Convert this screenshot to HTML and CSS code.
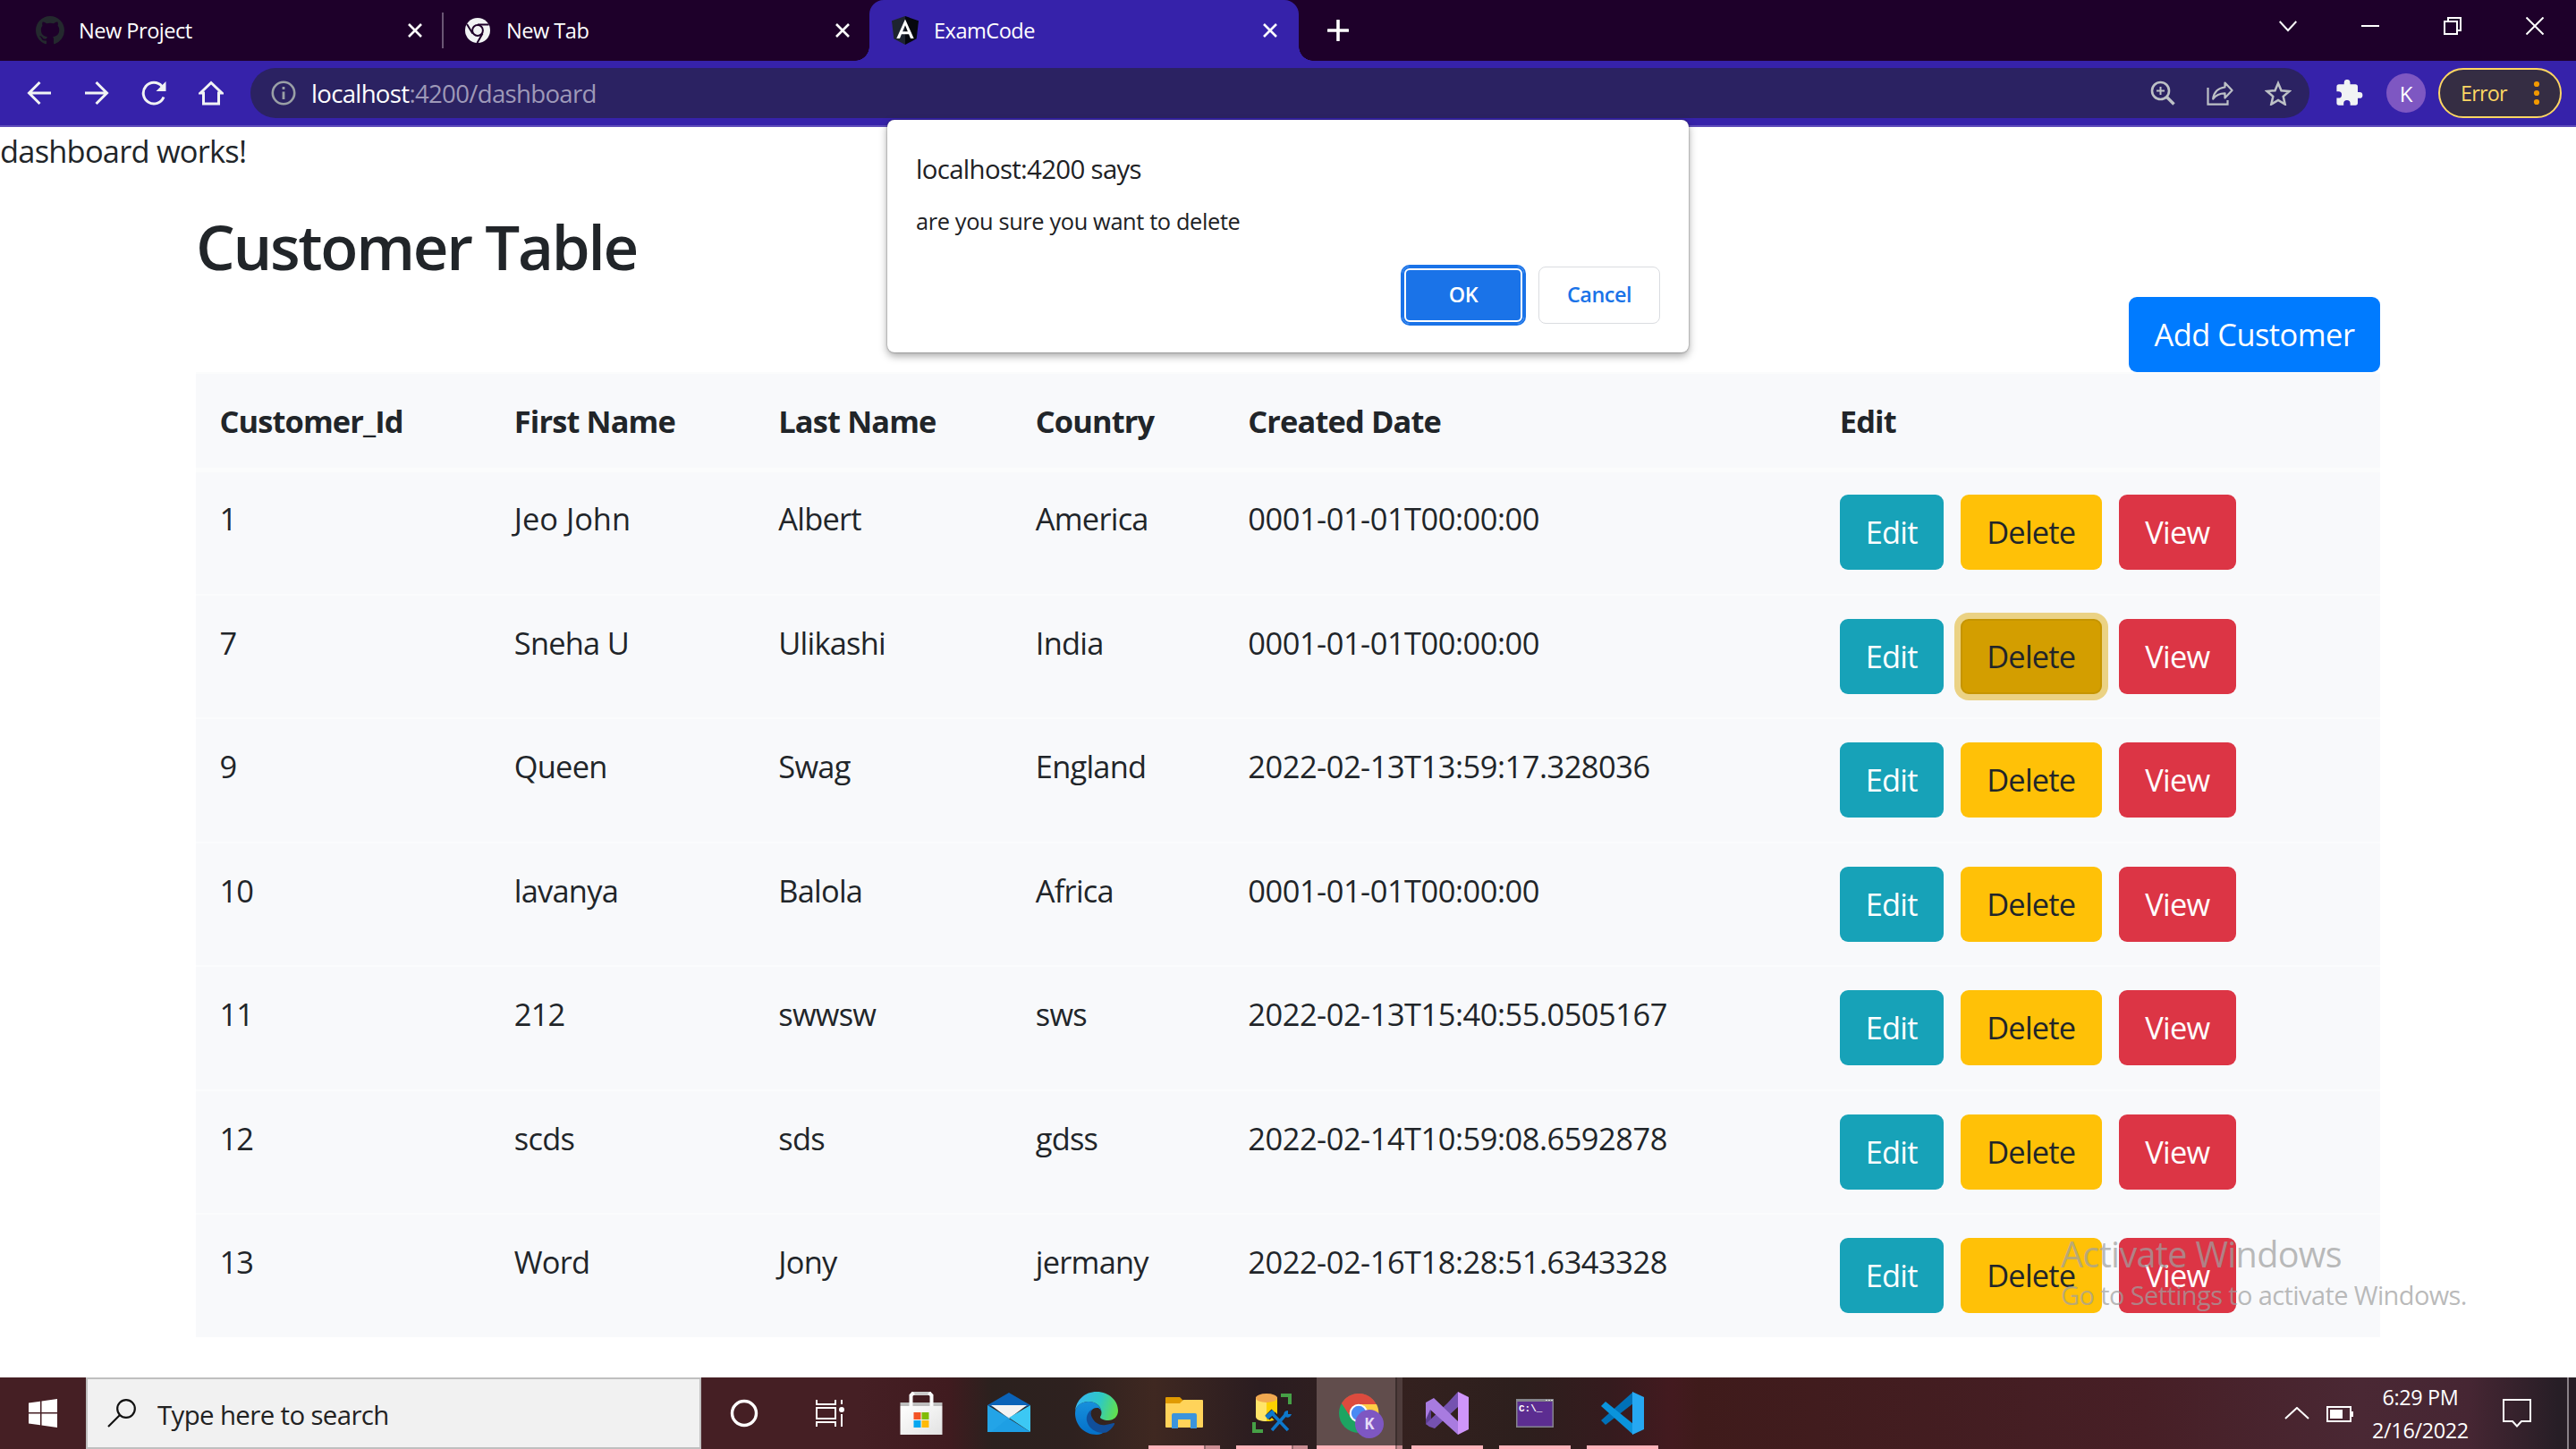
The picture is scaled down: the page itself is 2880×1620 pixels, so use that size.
FILE: index.html
```html
<!DOCTYPE html>
<html lang="en">
<head>
<meta charset="utf-8">
<title>ExamCode</title>
<link rel="stylesheet" href="styles.css">
</head>
<body>
<header class="tabstrip">
  <div class="tab tab-first">
    <svg class="fav" width="32" height="32" viewBox="0 0 16 16"><path fill="#24292e" d="M8 0C3.58 0 0 3.58 0 8c0 3.54 2.29 6.53 5.47 7.59.4.07.55-.17.55-.38 0-.19-.01-.82-.01-1.49-2.01.37-2.53-.49-2.69-.94-.09-.23-.48-.94-.82-1.13-.28-.15-.68-.52-.01-.53.63-.01 1.08.58 1.23.82.72 1.21 1.87.87 2.33.66.07-.52.28-.87.51-1.07-1.78-.2-3.64-.89-3.64-3.95 0-.87.31-1.59.82-2.15-.08-.2-.36-1.02.08-2.12 0 0 .67-.21 2.2.82.64-.18 1.32-.27 2-.27s1.36.09 2 .27c1.53-1.04 2.2-.82 2.2-.82.44 1.1.16 1.92.08 2.12.51.56.82 1.27.82 2.15 0 3.07-1.87 3.75-3.65 3.95.29.25.54.73.54 1.48 0 1.07-.01 1.93-.01 2.2 0 .21.15.46.55.38A8.01 8.01 0 0 0 16 8c0-4.42-3.58-8-8-8z"/></svg>
    <span class="tab-title">New Project</span>
    <svg class="x" width="16" height="16" viewBox="0 0 16 16"><path d="M1 1l14 14M15 1L1 15" stroke="#fff" stroke-width="2.6"/></svg>
  </div>
  <div class="tab tab-second">
    <svg class="fav" width="28" height="28" viewBox="0 0 28 28"><circle cx="14" cy="14" r="14" fill="#f1f3f4"/><circle cx="14" cy="14" r="5.9" fill="none" stroke="#1e002a" stroke-width="2"/><path d="M14 7.4h12.5M8.4 17.5L2 7M19.500 17.500L13.500 28" stroke="#1e002a" stroke-width="2" fill="none"/></svg>
    <span class="tab-title">New Tab</span>
    <svg class="x" width="16" height="16" viewBox="0 0 16 16"><path d="M1 1l14 14M15 1L1 15" stroke="#fff" stroke-width="2.6"/></svg>
  </div>
  <div class="tab tab-active">
    <svg class="fav" width="32" height="32" viewBox="0 0 32 32"><path fill="#1e2430" d="M16 0L1 5.300l2.300 20L16 32z"/><path fill="#05070d" d="M16 0l15 5.300-2.300 20L16 32z"/><path fill="#fff" fill-rule="evenodd" d="M16 3.500L6.300 25h3.700l1.900-4.800h8.200L22 25h3.700zM16 10.200l2.900 7h-5.800z"/></svg>
    <span class="tab-title">ExamCode</span>
    <svg class="x" width="16" height="16" viewBox="0 0 16 16"><path d="M1 1l14 14M15 1L1 15" stroke="#fff" stroke-width="2.6"/></svg>
  </div>
  <svg class="plus" width="24" height="24" viewBox="0 0 24 24"><path d="M12 1v22M1 12h22" stroke="#fff" stroke-width="3.600" stroke-linecap="round"/></svg>
  <div class="window-controls">
    <svg width="20" height="20" viewBox="0 0 20 20"><path d="M.7 5l9.300 10L19.300 5" fill="none" stroke="#fff" stroke-width="2"/></svg>
    <svg width="20" height="20" viewBox="0 0 20 20"><path d="M0 10h20" stroke="#fff" stroke-width="2"/></svg>
    <svg width="20" height="20" viewBox="0 0 20 20"><path d="M1 5h14v14H1zM5 5V1h14v14h-4" fill="none" stroke="#fff" stroke-width="2"/></svg>
    <svg width="20" height="20" viewBox="0 0 20 20"><path d="M.5.5l19 19M19.500.5l-19 19" stroke="#fff" stroke-width="2"/></svg>
  </div>
</header>
<nav class="toolbar">
  <div class="nav-buttons">
    <svg width="28" height="28" viewBox="0 0 28 28"><path d="M27 14H3M14.500 2L2.500 14l12 12" fill="none" stroke="#f1f3f4" stroke-width="3"/></svg>
    <svg width="28" height="28" viewBox="0 0 28 28"><path d="M1 14h24M13.500 2l12 12-12 12" fill="none" stroke="#f1f3f4" stroke-width="3"/></svg>
    <svg width="28" height="28" viewBox="0 0 28 28"><path d="M25 18.500A11.800 11.800 0 1 1 23 6.500" fill="none" stroke="#f1f3f4" stroke-width="3"/><path d="M27.500 1v11h-11z" fill="#f1f3f4"/></svg>
    <svg width="28" height="28" viewBox="0 0 28 28"><path d="M2 14L14 2.500 26 14h-3.500v12h-17V14z" fill="none" stroke="#f1f3f4" stroke-width="3"/></svg>
  </div>
  <div class="omnibox">
    <svg width="28" height="28" viewBox="0 0 28 28"><circle cx="14" cy="14" r="12.200" fill="none" stroke="#9aa0a6" stroke-width="2.600"/><path d="M14 7v3M14 12.500V21" stroke="#9aa0a6" stroke-width="2.800"/></svg>
    <span class="url">localhost<span class="url-rest">:4200/dashboard</span></span>
    <div class="omni-actions">
      <svg width="28" height="28" viewBox="0 0 28 28"><circle cx="11.500" cy="11.500" r="9.500" fill="none" stroke="#bdc1c6" stroke-width="2.600"/><path d="M11.500 7v9M7 11.500h9" stroke="#bdc1c6" stroke-width="2"/><path d="M18.500 18.500l8 8" stroke="#bdc1c6" stroke-width="3.400"/></svg>
      <svg width="30" height="28" viewBox="0 0 30 28"><path d="M1.500 8v18.700h22V22" fill="none" stroke="#bdc1c6" stroke-width="2.200"/><path d="M20.500 2.500l8 8.500-8 8.500v-5.200c-6 0-10.300 2-13.300 6.200C8 14 12 8.500 20.500 7.500z" fill="none" stroke="#bdc1c6" stroke-width="2.200" stroke-linejoin="round"/></svg>
      <svg width="30" height="28" viewBox="0 0 30 28"><path d="M15 3l3.500 8.200 8.900.8-6.700 5.900 2 8.700L15 22l-7.700 4.600 2-8.700L2.600 12l8.900-.8z" fill="none" stroke="#bdc1c6" stroke-width="2.500"/></svg>
    </div>
  </div>
  <svg class="puzzle" width="30" height="30" viewBox="0 0 30 30"><path fill="#f1f3f4" d="M26 14h-2V8a2.700 2.700 0 0 0-2.700-2.700H15.500v-2a3.400 3.400 0 0 0-6.800 0v2H3A2.700 2.700 0 0 0 .4 8v5.200h2a3.700 3.700 0 0 1 0 7.400h-2V26A2.700 2.700 0 0 0 3 28.700h5.200v-2a3.700 3.700 0 0 1 7.400 0v2h5.700A2.700 2.700 0 0 0 24 26v-5.200h2A3.400 3.400 0 0 0 26 14z"/></svg>
  <span class="avatar">K</span>
  <div class="error-pill"><span>Error</span><svg width="8" height="28" viewBox="0 0 8 28"><g fill="#f29900"><circle cx="4" cy="4" r="3.100"/><circle cx="4" cy="14" r="3.100"/><circle cx="4" cy="24" r="3.100"/></g></svg></div>
</nav>

<main class="page">
  <p class="works">dashboard works!</p>
  <div class="container">
    <h2>Customer Table</h2>
    <div class="actions"><button class="btn btn-primary">Add Customer</button></div>
    <table class="table">
      <thead><tr><th>Customer_Id</th><th>First Name</th><th>Last Name</th><th>Country</th><th>Created Date</th><th>Edit</th></tr></thead>
      <tbody>
        <tr><td>1</td><td class="loose">Jeo John</td><td>Albert</td><td>America</td><td class="date">0001-01-01T00:00:00</td><td class="btns"><button class="btn btn-info">Edit</button><button class="btn btn-warning">Delete</button><button class="btn btn-danger">View</button></td></tr>
        <tr><td>7</td><td>Sneha U</td><td>Ulikashi</td><td>India</td><td class="date">0001-01-01T00:00:00</td><td class="btns"><button class="btn btn-info">Edit</button><button class="btn btn-warning pressed">Delete</button><button class="btn btn-danger">View</button></td></tr>
        <tr><td>9</td><td>Queen</td><td>Swag</td><td>England</td><td class="date">2022-02-13T13:59:17.328036</td><td class="btns"><button class="btn btn-info">Edit</button><button class="btn btn-warning">Delete</button><button class="btn btn-danger">View</button></td></tr>
        <tr><td>10</td><td>lavanya</td><td>Balola</td><td>Africa</td><td class="date">0001-01-01T00:00:00</td><td class="btns"><button class="btn btn-info">Edit</button><button class="btn btn-warning">Delete</button><button class="btn btn-danger">View</button></td></tr>
        <tr><td>11</td><td>212</td><td>swwsw</td><td>sws</td><td class="date">2022-02-13T15:40:55.0505167</td><td class="btns"><button class="btn btn-info">Edit</button><button class="btn btn-warning">Delete</button><button class="btn btn-danger">View</button></td></tr>
        <tr><td>12</td><td>scds</td><td>sds</td><td>gdss</td><td class="date">2022-02-14T10:59:08.6592878</td><td class="btns"><button class="btn btn-info">Edit</button><button class="btn btn-warning">Delete</button><button class="btn btn-danger">View</button></td></tr>
        <tr><td>13</td><td>Word</td><td>Jony</td><td>jermany</td><td class="date">2022-02-16T18:28:51.6343328</td><td class="btns"><button class="btn btn-info">Edit</button><button class="btn btn-warning">Delete</button><button class="btn btn-danger">View</button></td></tr>
      </tbody>
    </table>
  </div>
</main>

<div class="dialog">
  <div class="dialog-title">localhost:4200 says</div>
  <div class="dialog-message">are you sure you want to delete</div>
  <div class="dialog-buttons"><button class="ok">OK</button><button class="cancel">Cancel</button></div>
</div>

<div class="watermark"><div class="wm-title">Activate Windows</div><div class="wm-text">Go to Settings to activate Windows.</div></div>

<footer class="taskbar">
  <div class="start"><svg width="32" height="32" viewBox="0 0 32 32"><path fill="#fff" d="M0 4.600L13 2.700V15H0zM14.500 2.500L32 0v15H14.500zM0 16.500h13v12.800L0 27.400zM14.500 16.500H32V32l-17.500-2.500z"/></svg></div>
  <div class="search"><svg width="32" height="32" viewBox="0 0 32 32"><circle cx="21" cy="11" r="9.800" fill="none" stroke="#111" stroke-width="2.200"/><path d="M14 18L1 31" stroke="#111" stroke-width="2.200"/></svg><span>Type here to search</span></div>
  <div class="slot"><svg width="32" height="32" viewBox="0 0 32 32"><circle cx="16" cy="16" r="13.500" fill="none" stroke="#fff" stroke-width="3.400"/></svg></div>
  <div class="slot"><svg width="32" height="32" viewBox="0 0 32 32"><path d="M1 1v5h21V1M1 31v-5h21v5M1 10h21v12H1zM29 1v5M29 17v14" fill="none" stroke="#fff" stroke-width="2"/><circle cx="29" cy="12" r="3" fill="#fff"/></svg></div>
  <div class="apps">
    <div class="app"><svg width="48" height="48" viewBox="0 0 48 48"><defs><linearGradient id="bag" x2="1" y2="1"><stop stop-color="#fff"/><stop offset="1" stop-color="#e2e2e2"/></linearGradient></defs><path d="M.5 12h47v4H.5z" fill="#bdbdbd"/><path d="M13 0h22v4H13z" fill="#c9c9c9"/><path d="M.5 16h47v32H.5z" fill="url(#bag)"/><path d="M12.500 16V4l3-3M35.500 16V4l-3-3" fill="none" stroke="#fafafa" stroke-width="4"/><path fill="#f35325" d="M15.500 23h8v8h-8z"/><path fill="#81bc06" d="M24.500 23h8v8h-8z"/><path fill="#05a6f0" d="M15.500 32h8v8h-8z"/><path fill="#ffba08" d="M24.500 32h8v8h-8z"/></svg></div>
    <div class="app"><svg width="48" height="48" viewBox="0 0 48 48"><path d="M0 15L24 1l24 14-24 8z" fill="#0a63b8"/><path d="M4 15h40L24 30z" fill="#f3f3f3"/><path d="M48 15v30L24 29z" fill="#3cc8f4"/><path d="M0 15l48 30H0z" fill="#1e9fe4"/><path d="M0 15l24 14-20 16H0z" fill="#28a8ea" opacity=".55"/></svg></div>
    <div class="app"><svg width="48" height="48" viewBox="0 0 48 48"><defs><linearGradient id="e1" x1="0" y1=".4" x2="1" y2=".6"><stop stop-color="#35b6f2"/><stop offset=".55" stop-color="#2fc9c3"/><stop offset="1" stop-color="#62e04c"/></linearGradient><linearGradient id="e2" x2="0" y2="1"><stop stop-color="#1790dc"/><stop offset="1" stop-color="#0470c9"/></linearGradient></defs><path d="M0 22C1 9 11 0 24 0c14 0 24 10 24 21 0 7-5 11-11 11-5 0-9-2-9-3.500 0-1 1.500-2 1.500-5C29.500 16 23 11 15 11 7 11 1 16 0 22z" fill="url(#e1)"/><path d="M0 24C0 16 7 11 15 11c9 0 14 6 14.500 11.500C28 18.500 26 18 24 18c-6 0-8 6-7 12 2 10 11 14 18 13-3 3-7 5-11 5C10 48 0 37 0 24z" fill="url(#e2)"/><path d="M20 19c-3 2-3 6-1 10 3 6 9 9 15 8 4-.5 6-1.500 9-2 1 0 1.500.5 1 1.500-3 5-6 7-9 9-10 2-20-4-22-13-1-6 2-11 7-13.500z" fill="#114f9b"/></svg></div>
    <div class="app run stacked"><svg width="42" height="36" viewBox="0 0 42 36"><path d="M0 1q0-1 1-1h15l4 4-3 4H0z" fill="#e09a00"/><path d="M0 7h16l4-4h21q1 0 1 1v29q0 1-1 1H1q-1 0-1-1z" fill="#ffd35a"/><path d="M7 35V20q0-2 2-2h24q2 0 2 2v15h-7V25H14v10z" fill="#3b94dc"/></svg></div>
    <div class="app run stacked"><svg width="44" height="48" viewBox="0 0 44 48"><path d="M32 2h12v12h-4V6h-8zM0 34h4v8h8v4H0z" fill="#46a046"/><path d="M4 6v22c0 3 5 5 12 5V6z" fill="#ffe468"/><path d="M16 6v27c7 0 12-2 12-5V6z" fill="#fcd100"/><ellipse cx="16" cy="7" rx="12" ry="5" fill="#f0a850"/><path d="M22 43l15-17M40 43L23 25M17 29l7-7M41 21l-3 5 5 0" stroke="#2a1c20" stroke-width="7" fill="none"/><path d="M22 43l15-17M40 43L23 25" stroke="#0d78cc" stroke-width="3.500"/><path d="M16 29l8-7" stroke="#0d78cc" stroke-width="5"/><path d="M40 21c-5 0-6 5-3 7s6 0 7-3h-4z" fill="#0d78cc"/></svg></div>
    <div class="app run chrome"><svg width="52" height="52" viewBox="0 0 52 52"><circle cx="24" cy="24" r="22" fill="#1da462"/><path d="M24 24L5 13A22 22 0 0 1 43 13z" fill="#dd4b3e"/><path d="M24 14h20a22 22 0 0 1-20 32l9-17z" fill="#ffcd46"/><path d="M5 13A22 22 0 0 1 43.700 14H24l-10 13z" fill="#dd4b3e"/><circle cx="24" cy="24" r="10.300" fill="#fff"/><circle cx="24" cy="24" r="8.200" fill="#4a8af4"/><circle cx="36" cy="36" r="16" fill="#7e57c2"/><text class="badge" x="36" y="42" text-anchor="middle">K</text></svg></div>
    <div class="app run"><svg width="48" height="48" viewBox="0 0 48 48"><path d="M0 12l6 4v16l-5 5-1-2z" fill="#5c3d91"/><path d="M0 36l4 3 6 2L36 17V0L24 13z" fill="#7552b0"/><path d="M0 12l9-5 27 26v15L5 20 0 31z" fill="#a87be0"/><path d="M36 0l12 6v36l-12 6z" fill="#cf95fa"/></svg></div>
    <div class="app run"><svg width="42" height="32" viewBox="0 0 42 32"><path d="M0 0h42v32H0z" fill="#85858c"/><path d="M1.500 3h39v27.500h-39z" fill="#5c2d91"/><path d="M33 1.500h2M36 1.500h2M39 1.500h2" stroke="#ddd"/><text class="cmd" x="3" y="14">C:\_</text></svg></div>
    <div class="app run"><svg width="48" height="48" viewBox="0 0 48 48"><path d="M0 32l5 5L36 13V0z" fill="#0071b8"/><path d="M0 16l5-5 31 25v12z" fill="#0a94dc"/><path d="M35 0l13 6v36l-13 6z" fill="#26a8f2"/></svg></div>
  </div>
  <div class="tray">
    <svg class="up" width="28" height="14" viewBox="0 0 28 14"><path d="M1 13L14 1l13 12" fill="none" stroke="#fff" stroke-width="2"/></svg>
    <svg class="battery" width="30" height="18" viewBox="0 0 30 18"><path d="M1 1h26v16H1z" fill="none" stroke="#fff" stroke-width="2"/><path d="M4 4h14v10H4zM28 6h2v6h-2z" fill="#fff"/></svg>
    <div class="clock"><span>6:29 PM</span><span>2/16/2022</span></div>
    <svg class="note" width="32" height="32" viewBox="0 0 32 32"><path d="M1 1h30v24H21l-5 5.500-5-5.500H1z" fill="none" stroke="#fff" stroke-width="2"/></svg>
  </div>
</footer>
</body>
</html>
```

FILE: styles.css
```css
* { box-sizing: border-box; }
html, body { margin: 0; height: 100%; }
body {
  display: flex; flex-direction: column; height: 1620px; overflow: hidden;
  position: relative; background: #fff; color: #212529;
  font-family: "Open Sans", "Noto Sans", sans-serif;
}
svg { display: block; flex: none; }
button { font: inherit; letter-spacing: inherit; margin: 0; }

.tabstrip { display: flex; align-items: center; height: 68px; background: #1e002a; color: #fff; font-size: 23.6px; letter-spacing: -.022em; }
.tab { display: flex; align-items: center; height: 68px; }
.tab-title { flex: 1; white-space: nowrap; line-height: 32px; }
.tab-first { width: 496px; padding: 0 24px 0 40px; gap: 16px; background: linear-gradient(#6a5674, #6a5674) right 14px / 2px 40px no-repeat; }
.tab-second { width: 476px; padding: 0 22px 0 24px; gap: 18px; }
.tab-active { position: relative; width: 480px; padding: 0 24px; gap: 16px; background: #3622aa; border-radius: 16px 16px 0 0; }
.tab-active::before, .tab-active::after { content: ""; position: absolute; bottom: 0; width: 16px; height: 16px; }
.tab-active::before { left: -16px; background: radial-gradient(circle at 0 0, #1e002a 15.5px, #3622aa 16px); }
.tab-active::after { right: -16px; background: radial-gradient(circle at 100% 0, #1e002a 15.5px, #3622aa 16px); }
.plus { margin-left: 32px; }
.window-controls { display: flex; gap: 72px; margin: 0 36px 10px auto; }

.toolbar { display: flex; align-items: center; height: 74px; padding-right: 16px; background: #3622aa; border-bottom: 2px solid #5f4dba; color: #fff; }
.nav-buttons { display: flex; gap: 36px; width: 280px; padding-left: 30px; }
.omnibox { display: flex; align-items: center; width: 2302px; height: 56px; padding: 0 20px 0 23px; border-radius: 28px; background: #2b2262; font-size: 27.6px; letter-spacing: -.025em; }
.url { margin: -1px 0 0 17px; line-height: 40px; }
.url-rest { color: #9e99b8; }
.omni-actions { display: flex; gap: 35px; margin-left: auto; }
.puzzle { margin-left: 30px; }
.avatar { display: flex; align-items: center; justify-content: center; width: 44px; height: 44px; margin-left: 26px; border-radius: 50%; background: #7e57c2; font-size: 24px; }
.error-pill { display: flex; align-items: center; justify-content: space-between; width: 138px; height: 56px; margin-left: 14px; padding: 0 22px 0 23px; border: 2px solid #fdd663; border-radius: 28px; background: #352d43; color: #fdd663; font-size: 23.4px; letter-spacing: -.035em; }

.page { height: 1398px; padding-top: 1px; font-size: 34.4px; line-height: 52.8px; letter-spacing: -.022em; }
.works { margin: 0 0 37px; }
.container { width: 2442px; margin: 0 auto; }
h2 { margin: 0 0 14.7px; font-size: 69px; line-height: 84.5px; font-weight: 600; letter-spacing: -.033em; }
.actions { display: flex; justify-content: flex-end; }
.btn { height: 84px; padding: 0; border: 2px solid transparent; border-radius: 9px; line-height: 52.8px; color: #fff; }
.btn-primary { width: 281px; background: #007bff; letter-spacing: -.015em; }
.btn-info { width: 116px; background: #17a2b8; }
.btn-warning { width: 158px; background: #ffc107; color: #212529; }
.btn-danger { width: 131px; background: #dc3545; }
.pressed { background: #d39e00; border-color: #c69500; box-shadow: 0 0 0 7px #ebd284; }
.table { display: block; background: #f8f9fb; }
thead, tbody { display: block; }
tr { display: grid; grid-template-columns: 329.4px 295.5px 287.5px 237.5px 661.5px 1fr; }
th, td { padding: 0 0 0 26.4px; text-align: left; }
td { padding-top: 1px; }
th { letter-spacing: -.025em; }
thead tr { height: 112px; padding-top: 27px; border-top: 2px solid #fbfcfc; border-bottom: 5px solid #fbfcfc; }
tbody tr { height: 138.5px; padding-top: 26px; border-top: 2px solid #fbfcfd; }
tbody tr:first-child { height: 136px; padding-top: 25px; border-top: 0; }
.loose { letter-spacing: 0; }
.date { letter-spacing: -.0135em; }
.btns { display: flex; gap: 19px; padding-top: 0; }

.dialog { position: absolute; left: 992px; top: 134px; width: 896px; height: 260px; padding: 35px 32px 32px; border-radius: 8px; background: #fff; box-shadow: 0 0 2px rgba(0,0,0,.5), 0 4px 10px rgba(0,0,0,.35); color: #202124; }
.dialog-title { font-size: 29.4px; line-height: 40px; letter-spacing: -.023em; }
.dialog-message { margin-top: 20px; font-size: 25.4px; line-height: 36px; letter-spacing: -.015em; }
.dialog-buttons { display: flex; justify-content: flex-end; gap: 16px; margin-top: 33px; font-size: 23.4px; font-weight: 600; letter-spacing: -.02em; }
.dialog-buttons button { height: 64px; border-radius: 8px; padding: 0 0 2px; }
.ok { width: 136px; border: 0; background: #1a73e8; color: #fff; box-shadow: inset 0 0 0 2px #1a73e8, inset 0 0 0 4px #fff, 0 0 0 2px #1a73e8; }
.cancel { width: 136px; border: 1px solid #dadce0; background: #fff; color: #1a73e8; }

.watermark { position: absolute; left: 2304px; top: 1374px; color: rgba(160,160,160,.72); white-space: nowrap; }
.wm-title { font-size: 39.6px; line-height: 56px; letter-spacing: -.017em; }
.wm-text { margin-top: -2px; font-size: 29px; line-height: 40px; letter-spacing: -.021em; }

.taskbar { display: flex; height: 80px; color: #fff; background: linear-gradient(90deg, #451f24 0, #451f24 960px, #401b1f 1060px, #2b211e 1110px, #2e211f 1200px, #3f2821 1290px, #2a1c20 1410px, #34211f 1560px, #2d1f1d 1700px, #351b1e 1800px, #431a1f 1870px, #3f1b1b 1900px, #471f26 2400px, #4a2834 2640px, #462633 2760px, #271e26 2860px); }
.start { width: 96px; padding: 24px 32px; }
.search { display: flex; align-items: center; gap: 24px; width: 688px; padding-left: 22px; border: 2px solid #bfbfbf; background: #f1f1f1; color: #222; font-size: 29.4px; letter-spacing: -.021em; }
.search span { padding-top: 4px; }
.slot { display: flex; align-items: center; justify-content: center; width: 96px; }
.apps { display: flex; margin-left: 5px; }
.app { position: relative; display: flex; align-items: center; justify-content: center; width: 98px; }
.run::after { content: ""; position: absolute; left: 9px; bottom: 0; width: 80px; height: 4px; background: #ffb3ba; }
.stacked::after { background: linear-gradient(90deg, #ffb3ba 62px, #96696d 62px, #96696d 64px, #cb8d93 64px); }
.chrome { background: linear-gradient(90deg, transparent 1px, #614d4c 1px, #614d4c 89px, #3c2e2d 89px, #3c2e2d 91px, #4f3d3c 91px, #4f3d3c 97px, transparent 97px); }
.chrome::after { left: 1px; width: 96px; background: linear-gradient(90deg, #ffb3ba 88px, #96696d 88px, #96696d 90px, #cb8d93 90px); }
.chrome svg { margin: 4px 0 0 2px; }
.badge { font: 700 17px "Open Sans", sans-serif; fill: #e6dcf7; }
.cmd { font: 700 11px "Liberation Mono", monospace; fill: #fff; }
.tray { display: flex; align-items: center; margin-left: auto; width: 318px; border-right: 2px solid #8a8288; margin-right: 8px; }
.battery { margin: 2px 0 0 19px; }
.clock { display: flex; flex-direction: column; align-items: center; width: 150px; padding-top: 2px; font-size: 23.4px; line-height: 37px; letter-spacing: -.014em; }
.note { margin-left: 17px; }
```
